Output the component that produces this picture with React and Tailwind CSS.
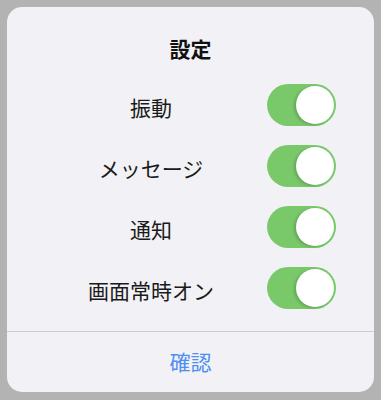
import React, { useState } from 'react';

const rows = ['振動', 'メッセージ', '通知', '画面常時オン'];

const Toggle = ({ on, onClick }) => (
  <button
    onClick={onClick}
    className={`relative w-[69px] h-[42px] rounded-full shrink-0 transition ${on ? 'bg-[#79c96b]' : 'bg-[#e4e4e8]'}`}
  >
    <span
      className={`absolute top-[2px] w-[38px] h-[38px] rounded-full bg-white shadow-[-2px_1px_3px_rgba(0,0,0,0.18)] transition-all ${on ? 'left-[29px]' : 'left-[2px]'}`}
    />
  </button>
);

const App = () => {
  const [state, setState] = useState([true, true, true, true]);

  const flip = (i) => setState(s => s.map((v, j) => (j === i ? !v : v)));

  return (
    <div className="w-[381px] h-[400px] bg-[#b3b3b3] p-[7px] pb-[8px]" style={{ fontFamily: '"Noto Sans CJK JP", "Noto Sans", sans-serif' }}>
      <div className="w-full h-full bg-[#f2f2f6] rounded-[15px] flex flex-col overflow-hidden">
        <div className="pt-[27px] h-[28px] leading-[28px] box-content text-center text-[21px] font-bold text-[#111]">
          設定
        </div>

        <div className="mt-[15px] flex flex-col">
          {rows.map((label, i) => (
            <div key={label} className="h-[61px] flex items-center pl-[40px]">
              <div className="w-[208px] text-center text-[21px] text-[#1a1a1a]">{label}</div>
              <div className="ml-[12px]">
                <Toggle on={state[i]} onClick={() => flip(i)} />
              </div>
            </div>
          ))}
        </div>

        <div className="mt-[10px] h-px bg-[#cbcbd0]" />

        <button className="flex-1 flex items-center justify-center text-[21px] text-[#4c8ef2]">
          確認
        </button>
      </div>
    </div>
  );
};

export default App;
